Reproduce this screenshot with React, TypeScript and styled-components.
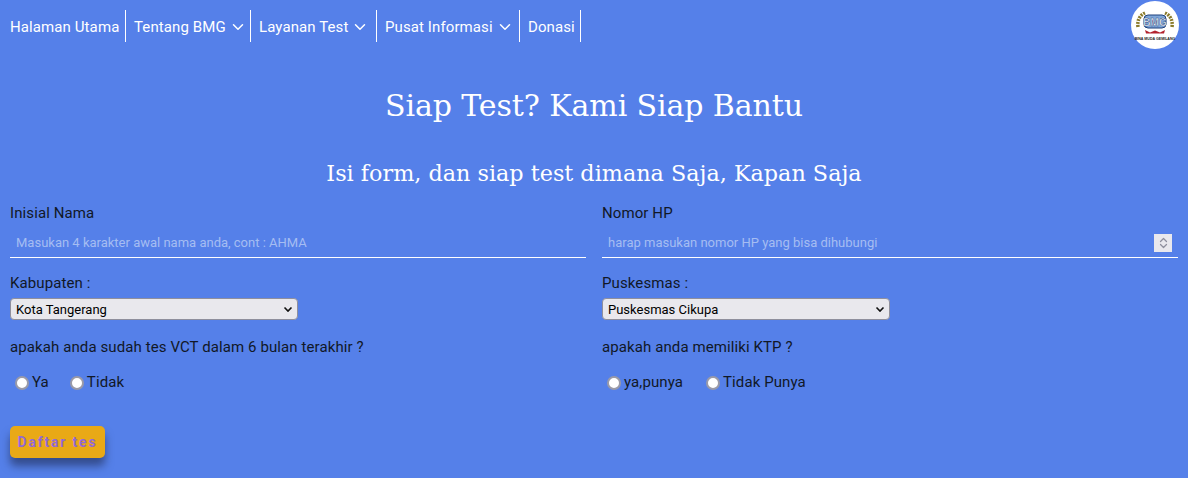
import React from "react";
import styled, { createGlobalStyle } from "styled-components";
import { ChevronDown, ChevronUp } from "lucide-react";

const Global = createGlobalStyle`
  html, body { margin: 0; padding: 0; background: #5580e9; }
  body { font-family: Roboto, "Liberation Sans", sans-serif; color: #111827; }
  * { box-sizing: border-box; }
`;

const Page = styled.div`
  width: 1188px;
  height: 478px;
  overflow: hidden;
  background: #5580e9;
`;

const Navbar = styled.nav`
  display: flex;
  align-items: flex-start;
  justify-content: space-between;
  padding: 1px 9px 0 10px;
  height: 52px;
`;

const Menu = styled.ul`
  display: flex;
  list-style: none;
  margin: 9px 0 0;
  padding: 0;
`;

const MenuItem = styled.li<{ $w: number; $pad: number }>`
  display: flex;
  align-items: center;
  flex: none;
  width: ${(p) => p.$w}px;
  height: 32px;
  padding: 2px 0 0 ${(p) => p.$pad}px;
  border-right: 1px solid #fff;
  color: #fff;
  font-size: 15px;
  letter-spacing: 0.1px;
  white-space: nowrap;
  gap: 3px;
`;

const Logo = styled.div`
  width: 48px;
  height: 48px;
  border-radius: 50%;
  background: #fff;
  display: flex;
  align-items: center;
  justify-content: center;
`;

const Title = styled.h1`
  margin: 32px 0 0;
  height: 44px;
  line-height: 44px;
  text-align: center;
  font-family: "DejaVu Serif", serif;
  font-weight: 400;
  font-size: 30px;
  letter-spacing: -0.1px;
  color: #fff;
`;

const Subtitle = styled.h2`
  margin: 29px 0 0;
  height: 32px;
  line-height: 32px;
  text-align: center;
  font-family: "DejaVu Serif", serif;
  font-weight: 400;
  font-size: 22.3px;
  color: #fff;
`;

const Form = styled.form`
  display: grid;
  grid-template-columns: 576px 576px;
  column-gap: 16px;
  padding: 0 10px;
  margin-top: 14px;
`;

const Field = styled.div`
  display: flex;
  flex-direction: column;
`;

const Label = styled.label`
  font-size: 15px;
  line-height: 20px;
  letter-spacing: 0.1px;
  color: #111827;
`;

const InputWrap = styled.div`
  position: relative;
  margin-top: 5px;
`;

const TextInput = styled.input`
  display: block;
  width: 100%;
  height: 30px;
  padding: 0 6px;
  border: 0;
  border-bottom: 1px solid #fff;
  background: transparent;
  outline: 0;
  font-family: inherit;
  font-size: 13px;
  color: #111827;
  appearance: textfield;
  &::placeholder { color: #a5bdf2; opacity: 1; }
  &::-webkit-inner-spin-button { appearance: none; margin: 0; }
`;

const Spinner = styled.div`
  position: absolute;
  top: 6px;
  right: 6px;
  width: 18px;
  height: 18px;
  background: #e9e8ed;
  color: #8f8f9d;
  display: flex;
  flex-direction: column;
  align-items: center;
  justify-content: center;
  pointer-events: none;
`;

const SpinUp = styled(ChevronUp)`
  margin-bottom: -3px;
`;

const SpinDown = styled(ChevronDown)`
  margin-top: -3px;
`;

const SelectLabel = styled(Label)`
  margin-top: 15px;
`;

const chevron =
  "url(\"data:image/svg+xml,%3Csvg xmlns='http://www.w3.org/2000/svg' width='12' height='12' viewBox='0 0 12 12'%3E%3Cpath d='M2.5 4.5 6 8l3.5-3.5' fill='none' stroke='%23111' stroke-width='1.6'/%3E%3C/svg%3E\")";

const Select = styled.select`
  appearance: none;
  width: 288px;
  height: 22px;
  margin-top: 5px;
  padding: 0 0 0 5px;
  border: 1px solid #8f8f9d;
  border-radius: 4px;
  background: #e9e8ed ${chevron} no-repeat right 3px center;
  font-family: inherit;
  font-size: 13px;
  color: #000;
`;

const Question = styled.p`
  margin: 17px 0 0;
  font-size: 15px;
  line-height: 20px;
  letter-spacing: 0.1px;
  color: #111827;
`;

const RadioRow = styled.div`
  display: flex;
  align-items: center;
  margin-top: 15px;
  height: 20px;
  padding-left: 5px;
`;

const RadioLabel = styled.label<{ $gap: number }>`
  display: flex;
  align-items: center;
  margin-right: ${(p) => p.$gap}px;
  font-size: 15px;
  letter-spacing: 0.1px;
  color: #111827;
`;

const Radio = styled.input`
  appearance: none;
  width: 14px;
  height: 14px;
  margin: 1px 3px 0 0;
  border: 2px solid #9a9aa8;
  border-radius: 50%;
  background: #fff;
`;

const SubmitButton = styled.button`
  display: block;
  width: 95px;
  height: 32px;
  margin: 34px 0 0 10px;
  border: 0;
  border-radius: 5px;
  background: #e9a916;
  color: #9268d6;
  font-family: Roboto, sans-serif;
  font-weight: 700;
  font-size: 14px;
  letter-spacing: 1.8px;
  box-shadow: 0 8px 9px rgba(30, 41, 80, 0.6);
`;

const items = [
  { label: "Halaman Utama", w: 116, pad: 0, chevron: false },
  { label: "Tentang BMG", w: 125, pad: 8, chevron: true },
  { label: "Layanan Test", w: 126, pad: 8, chevron: true },
  { label: "Pusat Informasi", w: 143, pad: 8, chevron: true },
  { label: "Donasi", w: 61, pad: 8, chevron: false },
];

function LogoMark() {
  return (
    <svg width="46" height="46" viewBox="0 0 46 46">
      <path d="M6 25c-1-7 2-12 7-14M40 25c1-7-2-12-7-14" fill="none" stroke="#8a7a2a" strokeWidth="3.5" strokeDasharray="2 1" />
      <rect x="12" y="13" width="22" height="13" rx="4" fill="#7fa6d8" stroke="#1d3f7a" />
      <text x="23" y="23.5" textAnchor="middle" fontSize="10" fontWeight="700" fill="#fff" stroke="#1d3f7a" strokeWidth="0.4" fontFamily="Liberation Sans, sans-serif">BMG</text>
      <path d="M13 28l5 2.5 5-2 5 2 5-2.500-1 3.500H14z" fill="#b3232e" />
      <text x="23" y="37.500" textAnchor="middle" fontSize="3.600" fontWeight="700" fill="#222" fontFamily="Liberation Sans, sans-serif">BINA MUDA GEMILANG</text>
    </svg>
  );
}

export default function App() {
  return (
    <Page>
      <Global />
      <Navbar>
        <Menu>
          {items.map((it) => (
            <MenuItem key={it.label} $w={it.w} $pad={it.pad}>
              {it.label}
              {it.chevron && <ChevronDown size={18} color="#fff" strokeWidth={2} />}
            </MenuItem>
          ))}
        </Menu>
        <Logo>
          <LogoMark />
        </Logo>
      </Navbar>
      <Title>Siap Test? Kami Siap Bantu</Title>
      <Subtitle>Isi form, dan siap test dimana Saja, Kapan Saja</Subtitle>
      <Form>
        <Field>
          <Label>Inisial Nama</Label>
          <InputWrap>
            <TextInput type="text" placeholder="Masukan 4 karakter awal nama anda, cont : AHMA" />
          </InputWrap>
          <SelectLabel>Kabupaten :</SelectLabel>
          <Select defaultValue="Kota Tangerang">
            <option>Kota Tangerang</option>
          </Select>
          <Question>apakah anda sudah tes VCT dalam 6 bulan terakhir ?</Question>
          <RadioRow>
            <RadioLabel $gap={21}><Radio type="radio" name="vct" />Ya</RadioLabel>
            <RadioLabel $gap={0}><Radio type="radio" name="vct" />Tidak</RadioLabel>
          </RadioRow>
        </Field>
        <Field>
          <Label>Nomor HP</Label>
          <InputWrap>
            <TextInput type="number" placeholder="harap masukan nomor HP yang bisa dihubungi" />
            <Spinner>
              <SpinUp size={13} strokeWidth={2.5} />
              <SpinDown size={13} strokeWidth={2.5} />
            </Spinner>
          </InputWrap>
          <SelectLabel>Puskesmas :</SelectLabel>
          <Select defaultValue="Puskesmas Cikupa">
            <option>Puskesmas Cikupa</option>
          </Select>
          <Question>apakah anda memiliki KTP ?</Question>
          <RadioRow>
            <RadioLabel $gap={23}><Radio type="radio" name="ktp" />ya,punya</RadioLabel>
            <RadioLabel $gap={0}><Radio type="radio" name="ktp" />Tidak Punya</RadioLabel>
          </RadioRow>
        </Field>
      </Form>
      <SubmitButton type="button">Daftar tes</SubmitButton>
    </Page>
  );
}
